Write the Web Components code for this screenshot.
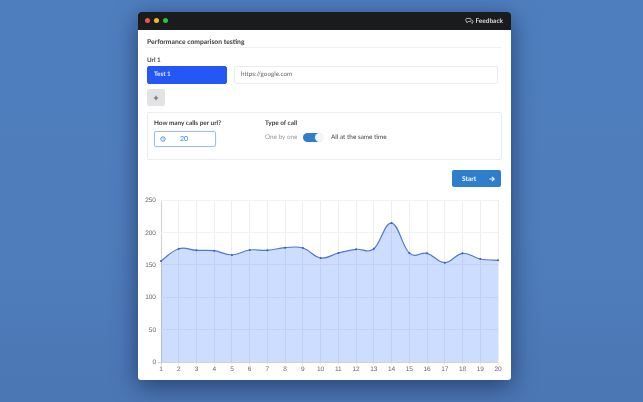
<!DOCTYPE html>
<html>
<head>
<meta charset="utf-8">
<title>Performance comparison testing</title>
<style>
    html, body { margin: 0; height: 100%; }
    body {
        width: 643px;
        height: 402px;
        overflow: hidden;
        background: linear-gradient(180deg, #4f7ebf 0%, #4f7dbb 60%, #4b77b4 100%);
        font-family: Lato, "Liberation Sans", sans-serif;
        text-rendering: geometricPrecision;
        padding: 12px 0 0 138px;
        box-sizing: border-box;
    }
</style>
</head>
<body>
<app-window>
    <title-bar slot="bar"></title-bar>
    <section-title>Performance comparison testing</section-title>
    <url-row label="Url 1" name="Test 1" url="https://google.com"></url-row>
    <add-button></add-button>
    <call-options></call-options>
    <start-button></start-button>
    <line-chart></line-chart>
</app-window>

<script>
class AppWindow extends HTMLElement {
    constructor() {
        super();
        this.attachShadow({ mode: "open" });
        this.shadowRoot.innerHTML = `
            <style>
                :host {
                    display: block;
                    width: 373px;
                    height: 368px;
                    background: #fff;
                    border-radius: 3px;
                    overflow: hidden;
                    box-shadow: 0 6px 24px rgba(10, 25, 60, .6);
                    color: #333;
                    filter: blur(.25px);
                }
                .content { padding: 0 9px; }
            </style>
            <slot name="bar"></slot>
            <div class="content"><slot></slot></div>
        `;
    }
}

class TitleBar extends HTMLElement {
    constructor() {
        super();
        this.attachShadow({ mode: "open" });
        this.shadowRoot.innerHTML = `
            <style>
                :host {
                    display: flex;
                    align-items: center;
                    box-sizing: border-box;
                    height: 18px;
                    padding: 0 8px 1px 7px;
                    background: #1a1b1c;
                    color: #d8d8d8;
                    font-size: 6.5px;
                    font-weight: 700;
                }
                .dot { width: 5px; height: 5px; border-radius: 50%; margin-right: 4px; }
                .feedback { margin-left: auto; display: flex; align-items: center; gap: 1px; margin-top: 1px; }
            </style>
            <span class="dot" style="background:#f0524f"></span>
            <span class="dot" style="background:#f6b62c"></span>
            <span class="dot" style="background:#2cc13f"></span>
            <span class="feedback">
                <svg width="9" height="8" viewBox="0 0 9 8" fill="none" stroke="#d8d8d8" stroke-width=".8">
                    <path d="M1.6 1.4h3.4q1 0 1 1v1.2q0 1-1 1H3.2L2 5.8V4.6q-1.2 0-1.2-1V2.4q0-1 .8-1z"/>
                    <path d="M7 3.4q1 .1 1 1v.4q0 .8-.7.9v.7l-1-.7"/>
                </svg>
                Feedback
            </span>
        `;
    }
}

class SectionTitle extends HTMLElement {
    constructor() {
        super();
        this.attachShadow({ mode: "open" });
        this.shadowRoot.innerHTML = `
            <style>
                :host {
                    display: block;
                    padding-top: 7px;
                    height: 10px;
                    line-height: 10px;
                    font-size: 6.75px;
                    font-weight: 700;
                    color: #3a3a3a;
                    border-bottom: 1px solid #f0f0f0;
                    margin-bottom: 8px;
                }
            </style>
            <slot></slot>
        `;
    }
}

class UrlRow extends HTMLElement {
    constructor() {
        super();
        this.attachShadow({ mode: "open" });
        this.shadowRoot.innerHTML = `
            <style>
                :host { display: block; font-size: 6.3px; }
                label { display: block; height: 9px; line-height: 9px; font-weight: 700; color: #444; margin-bottom: 1px; }
                .row { display: flex; gap: 7px; padding-right: 4px; }
                .name, .url {
                    box-sizing: border-box;
                    height: 18px;
                    line-height: 16px;
                    border-radius: 2px;
                    padding: 0 6px;
                }
                .name { width: 80px; background: #2457f5; border: 1px solid #2457f5; color: #e6ecff; font-weight: 700; }
                .url { flex: 1; background: #fff; border: 1px solid #ececec; color: #666; }
            </style>
            <label></label>
            <div class="row"><div class="name"></div><div class="url"></div></div>
        `;
    }
    connectedCallback() {
        this.shadowRoot.querySelector("label").textContent = this.getAttribute("label");
        this.shadowRoot.querySelector(".name").textContent = this.getAttribute("name");
        this.shadowRoot.querySelector(".url").textContent = this.getAttribute("url");
    }
}

class AddButton extends HTMLElement {
    constructor() {
        super();
        this.attachShadow({ mode: "open" });
        this.shadowRoot.innerHTML = `
            <style>
                :host {
                    display: flex;
                    align-items: center;
                    justify-content: center;
                    width: 18px;
                    height: 17px;
                    margin: 5px 0 6px;
                    background: #e2e3e4;
                    border-radius: 2px;
                }
            </style>
            <svg width="6" height="6" viewBox="0 0 6 6"><path d="M3 .8v4.4M.8 3h4.4" stroke="#666" stroke-width="1.1"/></svg>
        `;
    }
}

class CallOptions extends HTMLElement {
    constructor() {
        super();
        this.attachShadow({ mode: "open" });
        this.shadowRoot.innerHTML = `
            <style>
                :host {
                    display: flex;
                    box-sizing: border-box;
                    height: 48px;
                    padding: 7px 6px 0;
                    border: 1px solid #ececec;
                    border-radius: 2px;
                    font-size: 6.4px;
                    color: #444;
                }
                .col1 { width: 111px; }
                h4 { margin: 0 0 4px; height: 7px; line-height: 7px; font-size: 6.4px; font-weight: 700; color: #3a3a3a; }
                .count {
                    box-sizing: border-box;
                    display: flex;
                    align-items: center;
                    width: 62px;
                    height: 16px;
                    margin-top: 2px;
                    padding-left: 5px;
                    border: 1px solid #9dbfe6;
                    border-radius: 2px;
                    box-shadow: 0 0 1px #b9d2ee;
                    color: #2f7ecb;
                    font-size: 7px;
                }
                .count span { margin-left: 14px; }
                .type { display: flex; align-items: center; height: 12px; margin-top: 1px; }
                .off { color: #999; width: 38px; }
                .on { color: #444; margin-left: 8px; }
                .toggle { position: relative; width: 20px; height: 9px; background: #2f7ecb; border-radius: 5px; }
                .knob { position: absolute; right: -1px; top: 0; width: 9px; height: 9px; background: #f4f5f6; border-radius: 50%; }
            </style>
            <div class="col1">
                <h4>How many calls per url?</h4>
                <div class="count">
                    <svg width="6" height="6" viewBox="0 0 6 6"><circle cx="3" cy="3" r="2.2" fill="none" stroke="#2f7ecb" stroke-width=".8"/><path d="M3 1.8V3h1" fill="none" stroke="#2f7ecb" stroke-width=".5"/></svg>
                    <span>20</span>
                </div>
            </div>
            <div>
                <h4>Type of call</h4>
                <div class="type">
                    <span class="off">One by one</span>
                    <span class="toggle"><span class="knob"></span></span>
                    <span class="on">All at the same time</span>
                </div>
            </div>
        `;
    }
}

class StartButton extends HTMLElement {
    constructor() {
        super();
        this.attachShadow({ mode: "open" });
        this.shadowRoot.innerHTML = `
            <style>
                :host {
                    display: flex;
                    align-items: center;
                    box-sizing: border-box;
                    width: 49px;
                    height: 17px;
                    margin: 10px 1px 0 auto;
                    padding: 0 6px 0 10px;
                    background: #2f7ecb;
                    border-radius: 2px;
                    color: #f2f7fc;
                    font-size: 6.6px;
                    font-weight: 700;
                    justify-content: space-between;
                }
            </style>
            <span>Start</span>
            <svg width="6" height="6" viewBox="0 0 6 6" fill="none" stroke="#f2f7fc" stroke-width="1.2"><path d="M.4 3h4.6M3 .8 5.2 3 3 5.2"/></svg>
        `;
    }
}

class LineChart extends HTMLElement {
    constructor() {
        super();
        this.attachShadow({ mode: "open" });
        // alturas leidas del grafico, en pixeles de la pagina
        const ys = [260, 247.7, 249.3, 249.7, 254, 249, 249.3, 246.7, 247, 257, 252, 248.3, 247.7, 222, 252, 252.3, 261.7, 252.3, 258, 259.3];
        const x0 = 14, w = 337, top = 4, h = 162;
        const pts = ys.map((y, i) => [x0 + i * w / 19, y - 195]);

        let grid = "", labels = "";
        pts.forEach((p, i) => {
            grid += `<path d="M${p[0]} ${top}V${top + h + 3}" stroke="${i ? "#eeeeee" : "#d2d2d2"}"/>`;
            labels += `<text x="${p[0]}" y="174.5" text-anchor="middle">${i + 1}</text>`;
        });
        [250, 200, 150, 100, 50, 0].forEach((v) => {
            const y = top + h - v * h / 250;
            grid += `<path d="M${x0 - 3} ${y}H${x0 + w}" stroke="${v ? "#f1f1f1" : "#d2d2d2"}"/>`;
            labels += `<text x="${x0 - 5}" y="${y + 2.2}" text-anchor="end">${v}</text>`;
        });

        // curva suavizada, tension 0.4
        let line = `M${pts[0][0]} ${pts[0][1]}`;
        for (let i = 0; i < pts.length - 1; i++) {
            const a = pts[i - 1] || pts[i], b = pts[i], c = pts[i + 1], d = pts[i + 2] || c;
            const k = 0.2;
            line += `C${b[0] + (c[0] - a[0]) * k} ${b[1] + (c[1] - a[1]) * k} ${c[0] - (d[0] - b[0]) * k} ${c[1] - (d[1] - b[1]) * k} ${c[0]} ${c[1]}`;
        }
        const area = `${line}V${top + h}H${x0}Z`;
        const dots = pts.map((p) => `<circle cx="${p[0]}" cy="${p[1]}" r="1" fill="#2f5fc4"/>`).join("");

        this.shadowRoot.innerHTML = `
            <style>
                :host { display: block; margin: 9px 0 0 -9px; width: 373px; height: 180px; }
                svg { display: block; }
                text { font: 6.5px "Liberation Sans", sans-serif; fill: #666; }
            </style>
            <svg width="373" height="180" viewBox="-9 0 373 180">
                <g fill="none" stroke-width="1" shape-rendering="crispEdges">${grid}</g>
                <path d="${area}" fill="#3f7dff" fill-opacity=".26"/>
                <path d="${line}" fill="none" stroke="#4f78cf" stroke-width="1.2"/>
                ${dots}
                ${labels}
            </svg>
        `;
    }
}

customElements.define("app-window", AppWindow);
customElements.define("title-bar", TitleBar);
customElements.define("section-title", SectionTitle);
customElements.define("url-row", UrlRow);
customElements.define("add-button", AddButton);
customElements.define("call-options", CallOptions);
customElements.define("start-button", StartButton);
customElements.define("line-chart", LineChart);
</script>
</body>
</html>
